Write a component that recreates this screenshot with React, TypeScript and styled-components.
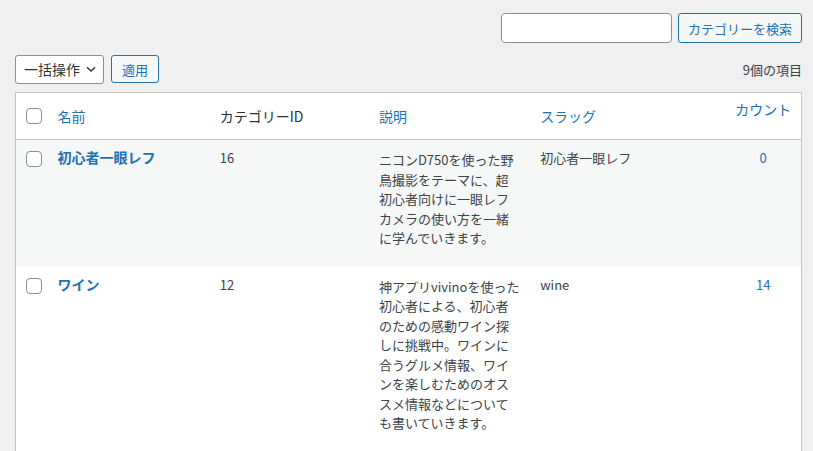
import React from "react";
import styled, { createGlobalStyle } from "styled-components";

const Global = createGlobalStyle`
  html, body { margin: 0; padding: 0; background: #f0f0f1; }
  body {
    font-family: "Noto Sans CJK JP", "Noto Sans", sans-serif;
    font-size: 13px;
    color: #3c434a;
  }
  * { box-sizing: border-box; }
`;

const Page = styled.div`
  padding: 13px 11px 0 15px;
  width: 813px;
`;

const SearchBar = styled.div`
  display: flex;
  justify-content: flex-end;
  gap: 6px;
`;

const SearchInput = styled.input`
  width: 171px;
  height: 30px;
  border: 1px solid #8c8f94;
  border-radius: 4px;
  background: #fff;
  font: inherit;
  padding: 0 8px;
`;

const Button = styled.button<{ $small?: boolean }>`
  height: ${(p) => (p.$small ? 28 : 30)}px;
  padding: 0 ${(p) => (p.$small ? 10 : 9)}px;
  border: 1px solid #2271b1;
  border-radius: 3px;
  background: #f6f7f7;
  color: #2271b1;
  font-family: inherit;
  font-size: 13px;
  line-height: 1;
  cursor: pointer;
`;

const NavBar = styled.div`
  display: flex;
  align-items: center;
  margin-top: 11px;
  height: 30px;
`;

const BulkSelect = styled.div`
  width: 89px;
  height: 29px;
  border: 1px solid #8c8f94;
  border-radius: 3px;
  background: #fff;
  display: flex;
  align-items: center;
  justify-content: space-between;
  padding: 0 6px 0 8px;
  font-size: 14px;
  color: #2c3338;
  margin-right: 7px;
`;

const Count = styled.div`
  margin-left: auto;
  font-size: 13px;
  color: #3c434a;
`;

const Table = styled.table`
  margin-top: 8px;
  width: 787px;
  border: 1px solid #c3c4c7;
  border-bottom: none;
  border-collapse: collapse;
  table-layout: fixed;
  background: #fff;
`;

const HeadCell = styled.th<{ $link?: boolean; $num?: boolean }>`
  height: 47px;
  padding: ${(p) => (p.$num ? "0 0 14px" : "0 10px")};
  text-align: ${(p) => (p.$num ? "center" : "left")};
  white-space: nowrap;
  font-weight: 400;
  font-size: 14px;
  color: ${(p) => (p.$link ? "#2271b1" : "#2c3338")};
  border-bottom: 1px solid #c3c4c7;
  vertical-align: middle;
`;

const Row = styled.tr<{ $alt?: boolean }>`
  background: ${(p) => (p.$alt ? "#f6f7f7" : "#fff")};
`;

const Cell = styled.td<{ $num?: boolean; $desc?: boolean }>`
  padding: ${(p) => (p.$desc ? "10px 10px 19px" : "8px 10px")};
  vertical-align: top;
  font-size: 13px;
  line-height: 19.5px;
  color: #3c434a;
  text-align: ${(p) => (p.$num ? "center" : "left")};
  word-break: normal;
  line-break: strict;
`;

const CheckCell = styled.td`
  padding: 11px 0 0 10px;
  vertical-align: top;
`;

const HeadCheck = styled.th`
  padding: 0 0 0 10px;
  border-bottom: 1px solid #c3c4c7;
  vertical-align: middle;
  text-align: left;
`;

const Box = styled.span`
  display: block;
  width: 16px;
  height: 16px;
  border: 1px solid #8c8f94;
  border-radius: 4px;
  background: #fff;
`;

const RowTitle = styled.a`
  font-size: 14px;
  font-weight: 700;
  color: #2271b1;
  text-decoration: none;
`;

const NumLink = styled.a`
  color: #2271b1;
  text-decoration: none;
`;

const rows = [
  {
    name: "初心者一眼レフ",
    id: "16",
    desc: "ニコンD750を使った野鳥撮影をテーマに、超初心者向けに一眼レフカメラの使い方を一緒に学んでいきます。",
    slug: "初心者一眼レフ",
    count: "0",
  },
  {
    name: "ワイン",
    id: "12",
    desc: "神アプリvivinoを使った初心者による、初心者のための感動ワイン探しに挑戦中。ワインに合うグルメ情報、ワインを楽しむためのオススメ情報などについても書いていきます。",
    slug: "wine",
    count: "14",
  },
];

export default function App() {
  return (
    <>
      <Global />
      <Page>
        <SearchBar>
          <SearchInput />
          <Button>カテゴリーを検索</Button>
        </SearchBar>
        <NavBar>
          <BulkSelect>
            <span>一括操作</span>
            <svg width="12" height="12" viewBox="0 0 12 12">
              <path d="M2 4.2 L6 8 L10 4.2" fill="none" stroke="#2c3338" strokeWidth="1.4" />
            </svg>
          </BulkSelect>
          <Button $small>適用</Button>
          <Count>9個の項目</Count>
        </NavBar>
        <Table>
          <colgroup>
            <col style={{ width: 32 }} />
            <col style={{ width: 162 }} />
            <col style={{ width: 159 }} />
            <col style={{ width: 161 }} />
            <col style={{ width: 195 }} />
            <col style={{ width: 76 }} />
          </colgroup>
          <thead>
            <tr>
              <HeadCheck>
                <Box />
              </HeadCheck>
              <HeadCell $link>名前</HeadCell>
              <HeadCell>カテゴリーID</HeadCell>
              <HeadCell $link>説明</HeadCell>
              <HeadCell $link>スラッグ</HeadCell>
              <HeadCell $link $num>カウント</HeadCell>
            </tr>
          </thead>
          <tbody>
            {rows.map((r, i) => (
              <Row key={r.id} $alt={i % 2 === 0}>
                <CheckCell>
                  <Box />
                </CheckCell>
                <Cell>
                  <RowTitle>{r.name}</RowTitle>
                </Cell>
                <Cell>{r.id}</Cell>
                <Cell $desc>{r.desc}</Cell>
                <Cell>{r.slug}</Cell>
                <Cell $num>
                  <NumLink>{r.count}</NumLink>
                </Cell>
              </Row>
            ))}
          </tbody>
        </Table>
      </Page>
    </>
  );
}
